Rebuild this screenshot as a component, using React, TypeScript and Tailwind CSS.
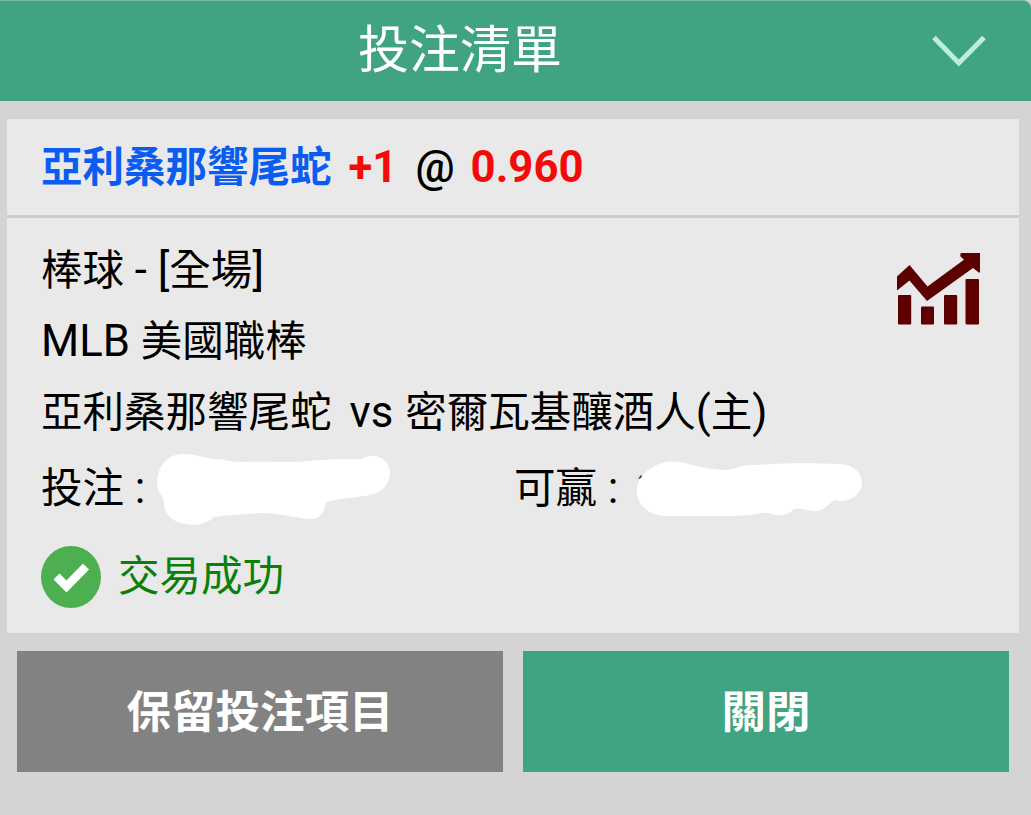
import React from 'react'

interface Bet {
  selection: string
  handicap: string
  odds: string
  sport: string
  scope: string
  league: string
  leagueName: string
  home: string
  away: string
}

const bet: Bet = {
  selection: '亞利桑那響尾蛇',
  handicap: '+1',
  odds: '0.960',
  sport: '棒球',
  scope: '全場',
  league: 'MLB',
  leagueName: '美國職棒',
  away: '亞利桑那響尾蛇',
  home: '密爾瓦基釀酒人',
}

// Latin glyphs are set a little larger than the Chinese ones
function Latin({ children }: { children: React.ReactNode }) {
  return <span className="text-[43.7px]">{children}</span>
}

function ChevronIcon() {
  return (
    <svg width="56" height="34" viewBox="0 0 56 34" fill="none">
      <path d="M3 3.5 L27.8 29 L53 3.5" stroke="#bdeedd" strokeWidth="5" />
    </svg>
  )
}

function StatsIcon() {
  return (
    <svg width="86" height="74" viewBox="0 0 86 74" fill="#5c0000">
      <path d="M1 24.5 L13.5 13 L31.5 34.5 L68 7.8 L64.5 4.5 Q63.8 1 65.5 1 H84 V20 Q83 21.5 81.5 19.500 L77 16 L31 49 L13.500 28.500 L1 38.5 Z" />
      <rect x="2" y="43" width="13.2" height="29.5" rx="1" />
      <rect x="25" y="54.5" width="13" height="18" rx="1" />
      <rect x="48" y="43" width="13.2" height="29.5" rx="1" />
      <rect x="69.5" y="27" width="13.5" height="45.5" rx="1" />
    </svg>
  )
}

function SuccessIcon() {
  return (
    <svg width="60" height="62" viewBox="0 0 60 62">
      <ellipse cx="30" cy="31" rx="30" ry="31" fill="#4caf50" />
      <path d="M15.5 30.5 L25.5 40.5 L45 20.5" fill="none" stroke="#fff" strokeWidth="8.5" />
    </svg>
  )
}

function StakeMask() {
  return (
    <svg width="236" height="72" viewBox="0 0 236 72" fill="#fff">
      <path d="M3 29 C4 12 14 1 29 1 C43 1 49 5 60 6 C72 6 76 9 85 9 C115 8 137 10 155 8 C175 6 195 6 208 6 C213 3 218 2 222 3 C231 5 236 12 236 21 C235 33 227 40 216 42 C202 45 185 45 172 49 C171 59 165 67 156 66 C144 65 125 60 108 60 C93 61 73 62 60 64 C53 71 41 73 31 71 C18 69 10 60 10 50 C10 43 3 40 3 29 Z" />
    </svg>
  )
}

function PayoutMask() {
  return (
    <svg width="228" height="58" viewBox="0 0 228 58" fill="#fff">
      <path d="M2 30 C2 17 14 6 31 2 C47 -1 65 10 92 10 C101 9 104 5 119 5 C148 3 173 3 205 4 C219 5 227 13 227 23 C226 36 213 43 200 40 C194 42 190 50 183 51 C174 52 168 48 159 49 C154 54 148 56 141 55 C136 55 134 52 127 53 C105 58 62 55 39 56 C17 58 1 47 2 30 Z" />
      <path d="M3 19 L5.5 15.5 L7 15 L6 18 Z" fill="#333" />
    </svg>
  )
}

export default function App() {
  return (
    <div className="flex h-[815px] w-[1031px] flex-col overflow-hidden bg-[#d4d4d4] font-['Roboto','Noto_Sans_CJK_TC',sans-serif] text-[41.5px] text-black">
      <header className="flex h-[101px] items-center rounded-tr-lg border-t border-[#79bba2] bg-[#40a382] pr-[44px] pb-px pl-[358px]">
        <h1 className="text-[51px] leading-none text-white">投注清單</h1>
        <button className="ml-auto">
          <ChevronIcon />
        </button>
      </header>

      <section className="mt-[18px] mr-3 ml-[7px] h-[514px] bg-[#e9e9e9]">
        <div className="flex h-[99px] items-baseline border-b-3 border-[#cdcdcd] pl-[34px] font-bold leading-[96px] whitespace-pre">
          <span className="text-[#0b5cf0]">{bet.selection}</span>
          <span className="ml-[17px] text-[43.7px] text-[#f50a0a]">{bet.handicap}</span>
          <span className="ml-[18px] text-[43.7px] font-medium">@</span>
          <span className="ml-[16px] text-[43.7px] text-[#f50a0a]">{bet.odds}</span>
        </div>

        <div className="relative pt-[17px] pl-[34px] whitespace-pre">
          <p className="h-[71px] leading-[71px]">
            {bet.sport}
            <Latin> - [</Latin>
            {bet.scope}
            <Latin>]</Latin>
          </p>
          <p className="h-[71px] leading-[71px]">
            <Latin>{bet.league} </Latin>
            {bet.leagueName}
          </p>
          <p className="flex h-[71px] items-baseline leading-[71px]">
            <span>{bet.away}</span>
            <span className="mr-[12px] ml-[18px] text-[43.7px]">vs</span>
            <span>
              {bet.home}
              <Latin>(</Latin>主<Latin>)</Latin>
            </span>
          </p>
          <div className="mt-0.5 flex h-[78px] items-center">
            <div className="flex w-[473px] items-center">
              <span>
                投注<Latin> :</Latin>
              </span>
              <span className="ml-[9px]">
                <StakeMask />
              </span>
            </div>
            <div className="flex items-center">
              <span>
                可贏<Latin> :</Latin>
              </span>
              <span className="ml-[17px]">
                <PayoutMask />
              </span>
            </div>
          </div>
          <div className="flex h-[97px] items-center text-[#0a800a]">
            <SuccessIcon />
            <span className="ml-[17px] pt-0.5">交易成功</span>
          </div>
          <button className="absolute top-[34px] right-[37px]">
            <StatsIcon />
          </button>
        </div>
      </section>

      <footer className="mt-[18px] grid h-[121px] grid-cols-2 gap-5 pr-[22px] pl-[17px] text-[44.5px] font-bold text-white">
        <button className="bg-[#828282] pt-1">保留投注項目</button>
        <button className="bg-[#40a382] pt-1">關閉</button>
      </footer>
    </div>
  )
}
